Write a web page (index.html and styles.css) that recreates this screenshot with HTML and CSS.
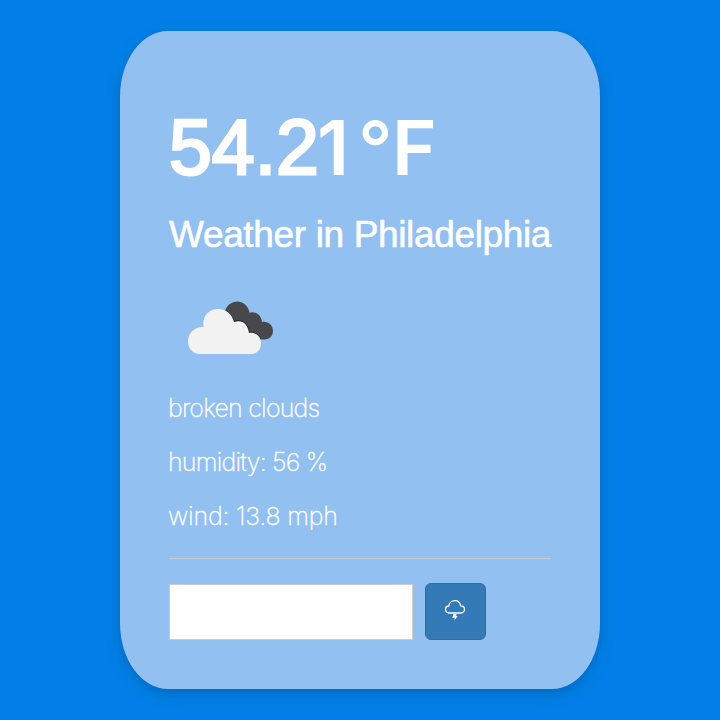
FILE: index.html
```html
<!DOCTYPE html>
<html lang="en">
<head>
<meta charset="utf-8">
<title>Weather</title>
<link rel="stylesheet" href="styles.css">
</head>
<body>
<main class="card">
  <h1 class="temp">54.2<span class="one">1</span><span class="degree">°</span><span class="unit">F</span></h1>
  <h2 class="city">Weather in Philadelphia</h2>
  <svg class="clouds" viewBox="0 0 100 75" width="100" height="75" aria-hidden="true">
    <path fill="#48484a" d="M45 21C47 15 52 11.600 57 11.600C63 11.600 68.500 16 69.500 22.700C75 20.500 81.500 25 82 32C88 31 93 35 93 41C93 46 89 49.500 84.500 49.500H60Z"/>
    <path fill="none" stroke="#29292b" stroke-width="1.500" d="M46 21.500C50 24 53 27.500 54 31.500C62 29 68 34 69 42.500C74 42 78 45 80 49"/>
    <path fill="#f2f2f2" d="M20 64C13 64 8 59 8 51C8 43 15 36.500 23.500 37C22 27 28 19 38 19C46 19 52 24 54 32C62 29 68 34 69 43C75 42 81 46 81 53C81 60 77 64 70 64Z"/>
  </svg>
  <p class="detail detail-clouds">broken clouds</p>
  <p class="detail detail-humidity">humidity: 56 %</p>
  <p class="detail detail-wind">wind: 13.8 mph</p>
  <form class="search">
    <input class="search-input" type="text" aria-label="City">
    <button class="search-button" type="button" aria-label="Get weather">
      <svg viewBox="0 0 22 24" width="22" height="24" aria-hidden="true">
        <path fill="none" stroke="#fff" stroke-width="1.300" stroke-linejoin="round" d="M5 15C2.900 15 1.500 13.300 1.500 11.300C1.500 9.300 3 8 4.800 8C5 4.800 7.800 2.700 11 2.700C14 2.700 16 4.500 16.600 7.800C19 7.800 20.500 9.300 20.500 11.300C20.500 13.300 19 15 17 15Z"/>
        <path fill="#fff" d="M9.500 16H12.500L12.200 18H13.800L10.500 22.300L10.800 19.800H8.300Z"/>
      </svg>
    </button>
  </form>
</main>
</body>
</html>
```
FILE: styles.css
```css
* {
  box-sizing: border-box;
}

body {
  margin: 0;
  height: 720px;
  padding-top: 31px;
  overflow: hidden;
  background: #027fe6;
  color: #fff;
  font-family: "Liberation Sans", Arial, sans-serif;
}

.card {
  width: 480px;
  height: 658px;
  margin: 0 auto;
  padding: 71px 49px 0;
  border-radius: 10%;
  background: #92c0f1;
  box-shadow: 0 4px 8px rgba(0, 0, 0, 0.1), 0 6px 20px rgba(0, 0, 0, 0.07);
}

.temp {
  margin: 0;
  height: 90px;
  font-size: 77px;
  line-height: 90px;
  font-weight: 400;
  white-space: nowrap;
  -webkit-text-stroke: 2.8px #fff;
}

.one,
.degree,
.unit {
  display: inline-block;
  font-family: Inter, sans-serif;
  font-size: 76px;
  font-weight: 600;
  line-height: 1;
  -webkit-text-stroke: 0;
}

.one {
  width: 43px;
  margin-left: -2px;
  margin-right: 2px;
  transform: translateY(1px);
}

.degree {
  width: 34px;
  margin-left: -4px;
  font-size: 76px;
  font-weight: 500;
  transform: translateY(2px);
}

.unit {
  transform: translateY(1px);
}

.city {
  margin: 21px 0 0;
  height: 44px;
  font-size: 37px;
  line-height: 44px;
  font-weight: 400;
  letter-spacing: -0.35px;
  white-space: nowrap;
  -webkit-text-stroke: 0.6px #fff;
}

.clouds {
  display: block;
  margin: 33px 0 0 11px;
}

.detail {
  width: max-content;
  margin: 0 0 24px -1px;
  font-family: Inter, sans-serif;
  font-size: 25px;
  line-height: 30px;
  font-weight: 200;
  letter-spacing: -0.8px;
  white-space: nowrap;
  -webkit-text-stroke: 0.3px #fff;
}

.detail-clouds {
  margin-top: 28px;
}

.detail-wind {
  margin-bottom: 0;
  letter-spacing: -0.22px;
}

.search {
  display: flex;
  gap: 12px;
  margin-top: 27px;
  padding-top: 25px;
  border-top: 1px solid #c9cdd3;
}

.search-input {
  width: 244px;
  height: 56px;
  padding: 8px;
  border: 1px solid #ccc;
  border-radius: 0;
  background: #fff;
  font-size: 24px;
  outline: none;
}

.search-button {
  display: flex;
  align-items: center;
  justify-content: center;
  width: 61px;
  height: 57px;
  padding: 0 1px 4px 0;
  margin-top: -1px;
  border: 1px solid #2e6da4;
  border-radius: 6px;
  background: #337ab7;
}
```
